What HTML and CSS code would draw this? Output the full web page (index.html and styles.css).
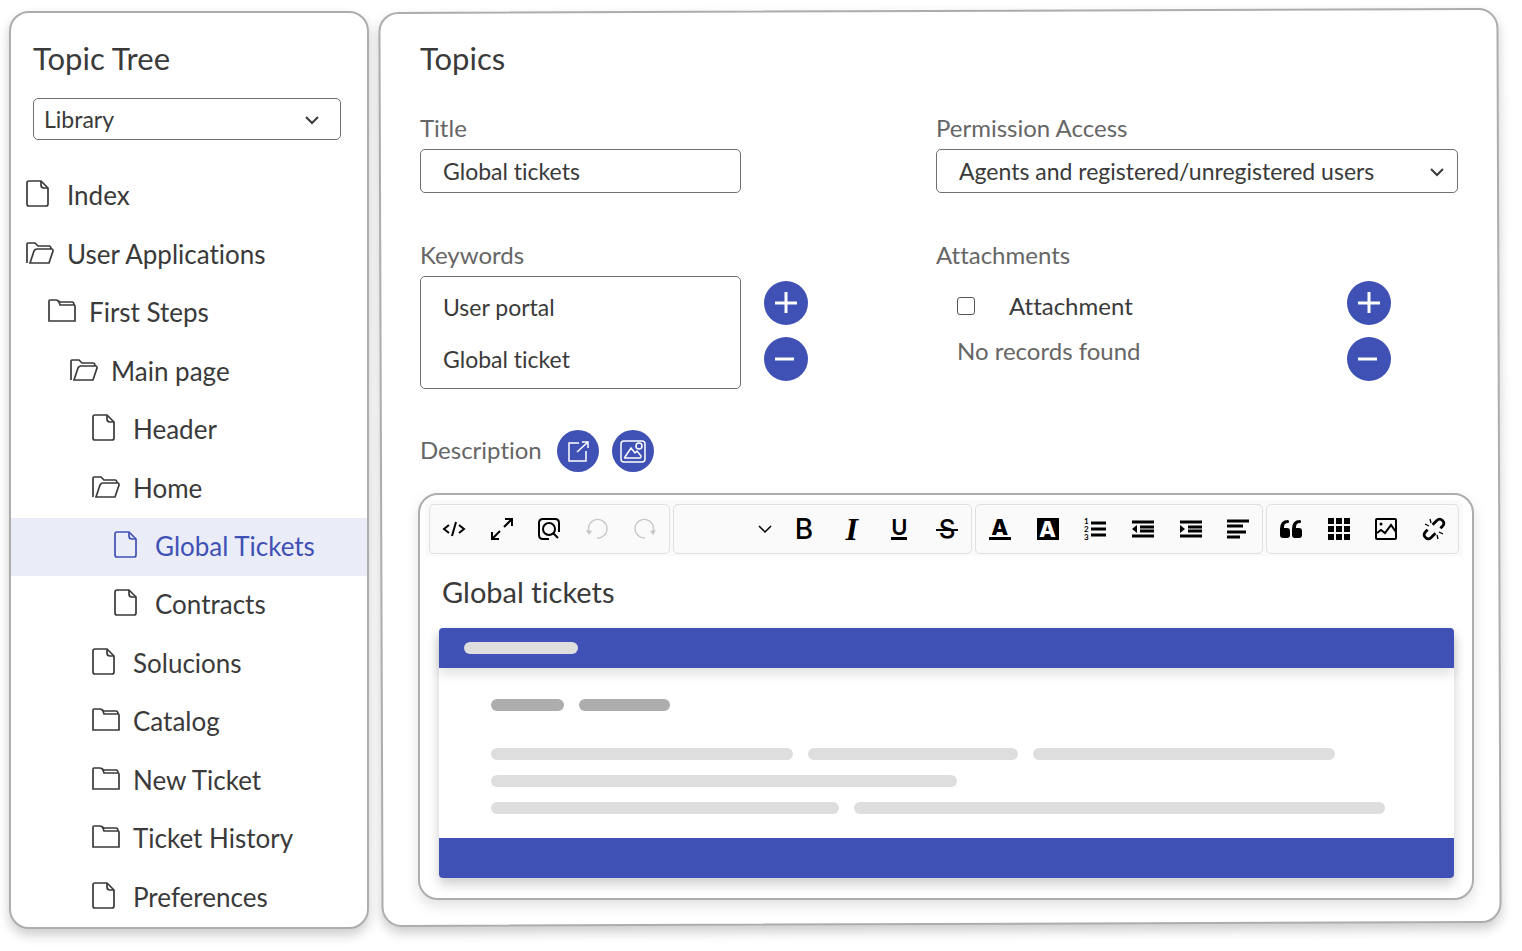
FILE: index.html
```html
<!DOCTYPE html>
<html lang="en">
<head>
<meta charset="utf-8">
<title>Topics</title>
<link rel="stylesheet" href="styles.css">
</head>
<body>
<svg class="defs" aria-hidden="true">
  <symbol id="file" viewBox="0 0 28 28">
    <path d="M3 1H15L22 8V24Q22 26 20 26H3Q1 26 1 24V3Q1 1 3 1Z"/>
    <path d="M15 1V5Q15 8 18 8H22"/>
  </symbol>
  <symbol id="folder" viewBox="0 0 28 28">
    <path d="M1 24V4Q1 3 2 3H8Q10 3 11 5L12 8H26Q27 8 27 9V24Z"/>
    <path d="M10 4L12 5H24Q26 5 26 8"/>
  </symbol>
  <symbol id="folder-open" viewBox="0 0 28 28">
    <path d="M1 24V5Q1 4 2 4H9L12 7H23Q25 7 25 10"/>
    <path d="M4 24L8 12Q9 10 11 10H26Q27 10 27 12L23 24Z"/>
  </symbol>
  <symbol id="chevron" viewBox="0 0 16 16"><path d="M2 5L8 11L14 5"/></symbol>
  <symbol id="plus" viewBox="0 0 24 24"><path d="M1 12H23M12 1V22"/></symbol>
  <symbol id="minus" viewBox="0 0 24 24"><path d="M1 12H20"/></symbol>
</svg>

<aside class="panel tree">
  <h1 class="title">Topic Tree</h1>
  <div class="select library">
    <select aria-label="Topic source"><option>Library</option></select>
    <svg class="chevron"><use href="#chevron"/></svg>
  </div>
  <ul class="nodes">
    <li><a class="node" href="#"><svg><use href="#file"/></svg>Index</a></li>
    <li><a class="node" href="#"><svg><use href="#folder-open"/></svg>User Applications</a></li>
    <li><a class="node level-1" href="#"><svg><use href="#folder"/></svg>First Steps</a></li>
    <li><a class="node level-2" href="#"><svg><use href="#folder-open"/></svg>Main page</a></li>
    <li><a class="node level-3" href="#"><svg><use href="#file"/></svg>Header</a></li>
    <li><a class="node level-3" href="#"><svg><use href="#folder-open"/></svg>Home</a></li>
    <li><a class="node level-4 selected" href="#" aria-current="page"><svg><use href="#file"/></svg>Global Tickets</a></li>
    <li><a class="node level-4" href="#"><svg><use href="#file"/></svg>Contracts</a></li>
    <li><a class="node level-3" href="#"><svg><use href="#file"/></svg>Solucions</a></li>
    <li><a class="node level-3" href="#"><svg><use href="#folder"/></svg>Catalog</a></li>
    <li><a class="node level-3" href="#"><svg><use href="#folder"/></svg>New Ticket</a></li>
    <li><a class="node level-3" href="#"><svg><use href="#folder"/></svg>Ticket History</a></li>
    <li><a class="node level-3" href="#"><svg><use href="#file"/></svg>Preferences</a></li>
  </ul>
</aside>

<main class="topics">
  <h1 class="title">Topics</h1>
  <form class="form">
    <div class="field">
      <label for="title">Title</label>
      <input class="control narrow" id="title" type="text" value="Global tickets">
    </div>
    <div class="field">
      <label for="access">Permission Access</label>
      <div class="select access">
        <select id="access"><option>Agents and registered/unregistered users</option></select>
        <svg class="chevron"><use href="#chevron"/></svg>
      </div>
    </div>
    <div class="field">
      <label for="keywords">Keywords</label>
      <div class="with-buttons">
        <select class="control narrow keywords" id="keywords" multiple size="2">
          <option>User portal</option>
          <option>Global ticket</option>
        </select>
        <div class="stack">
          <button class="round" type="button" aria-label="Add keyword"><svg><use href="#plus"/></svg></button>
          <button class="round" type="button" aria-label="Remove keyword"><svg><use href="#minus"/></svg></button>
        </div>
      </div>
    </div>
    <div class="field">
      <span class="label">Attachments</span>
      <div class="with-buttons attachments">
        <div class="records">
          <label class="check"><input type="checkbox">Attachment</label>
          <p>No records found</p>
        </div>
        <div class="stack">
          <button class="round" type="button" aria-label="Add attachment"><svg><use href="#plus"/></svg></button>
          <button class="round" type="button" aria-label="Remove attachment"><svg><use href="#minus"/></svg></button>
        </div>
      </div>
    </div>
  </form>

  <div class="description">
    <span class="label">Description</span>
    <button class="round small" type="button" aria-label="Open in new window">
      <svg viewBox="0 0 26 26"><path d="M14 5H4V23H21V13M12 14L23 4M17 4H23V10"/></svg>
    </button>
    <button class="round small" type="button" aria-label="Insert picture">
      <svg viewBox="0 0 26 26"><rect x="1" y="3" width="24" height="21" rx="3"/><circle cx="19" cy="8" r="3"/><path d="M5 19L11 10L15 15L17 13L21 18Q21 20 20 20H5Q4 20 5 19Z"/></svg>
    </button>
  </div>

  <section class="editor">
    <div class="toolbar" role="toolbar" aria-label="Formatting">
      <div class="group">
        <button type="button" aria-label="Source code"><svg viewBox="0 0 24 24"><path d="M7 8L2 12L7 16M17 8L22 12L17 16M14 5L10 19"/></svg></button>
        <button type="button" aria-label="Full screen"><svg viewBox="0 0 24 24"><path d="M15 2H22V9M22 2L14 10M9 22H2V15M2 22L10 14"/></svg></button>
        <button type="button" aria-label="Preview"><svg viewBox="0 0 24 24"><path d="M22 15V6Q22 2 18 2H6Q2 2 2 6V18Q2 22 6 22H12"/><circle cx="12" cy="12" r="6"/><path d="M16 16L21 21"/></svg></button>
        <button type="button" aria-label="Undo" disabled><svg viewBox="0 0 24 24"><path d="M4 15A9.300 9.300 0 1 1 12 21"/><path class="solid" d="M1 13L7 14L4 18Z"/></svg></button>
        <button type="button" aria-label="Redo" disabled><svg viewBox="0 0 24 24"><path d="M20 15A9.300 9.300 0 1 0 12 21"/><path class="solid" d="M23 13L17 14L20 18Z"/></svg></button>
      </div>
      <div class="group">
        <div class="select style">
          <select aria-label="Text style"><option label=" "></option></select>
          <svg class="chevron"><use href="#chevron"/></svg>
        </div>
        <button class="letter bold" type="button" aria-label="Bold">B</button>
        <button class="letter italic" type="button" aria-label="Italic">I</button>
        <button class="letter" type="button" aria-label="Underline"><span class="underline">U</span></button>
        <button class="letter" type="button" aria-label="Strikethrough"><span class="strike">S</span></button>
      </div>
      <div class="group">
        <button class="letter" type="button" aria-label="Text colour"><span class="text-colour">A</span></button>
        <button class="letter" type="button" aria-label="Highlight"><span class="highlight">A</span></button>
        <button type="button" aria-label="Numbered list"><svg viewBox="0 0 24 24"><path class="bar" d="M8 6H23M8 12H23M8 18H23"/><text x="1" y="7">1</text><text x="1" y="15">2</text><text x="1" y="23">3</text></svg></button>
        <button type="button" aria-label="Decrease indent"><svg viewBox="0 0 24 24"><path class="bar" d="M1 5H23M9 10H23M9 14H23M1 19H23"/><path class="solid" d="M1 12L6 8V16Z"/></svg></button>
        <button type="button" aria-label="Increase indent"><svg viewBox="0 0 24 24"><path class="bar" d="M1 5H23M9 10H23M9 14H23M1 19H23"/><path class="solid" d="M6 12L1 8V16Z"/></svg></button>
        <button type="button" aria-label="Align left"><svg viewBox="0 0 24 24"><path class="bar" d="M1 4H23M1 9H17M1 15H20M1 20H14"/></svg></button>
      </div>
      <div class="group">
        <button type="button" aria-label="Quote"><svg viewBox="0 0 24 24"><path class="solid" d="M1 12Q1 3 9 3Q10 3 10 5Q10 6 9 6Q5 6 5 10V11H8Q11 11 11 14V18Q11 21 8 21H4Q1 21 1 18ZM13 12Q13 3 21 3Q22 3 22 5Q22 6 21 6Q17 6 17 10V11H20Q23 11 23 14V18Q23 21 20 21H16Q13 21 13 18Z"/></svg></button>
        <button type="button" aria-label="Table"><svg viewBox="0 0 24 24"><path class="solid" d="M1 1h6v6H1zM9 1h6v6H9zM17 1h6v6h-6zM1 9h6v6H1zM9 9h6v6H9zM17 9h6v6h-6zM1 17h6v6H1zM9 17h6v6H9zM17 17h6v6h-6z"/></svg></button>
        <button type="button" aria-label="Image"><svg viewBox="0 0 24 24"><rect x="2" y="2" width="20" height="20" rx="1"/><circle class="solid" cx="7" cy="7" r="1.500"/><path d="M3 16L7 13L11 16L17 8L22 15"/></svg></button>
        <button type="button" aria-label="Remove link"><svg viewBox="0 0 24 24"><g class="chain" transform="rotate(-45 12 12)"><path d="M14 8H20Q24 8 24 12T20 16H17M10 16H4Q0 16 0 12T4 8H7"/></g><path class="ray" d="M8 2L9 6M3 7L7 9M16 22L15 18M21 17L17 15"/></svg></button>
      </div>
    </div>
    <h2 class="heading">Global tickets</h2>
    <div class="preview">
      <div class="preview-head"><i class="pill w-114"></i></div>
      <div class="preview-body">
        <div class="line dark"><i class="pill w-73"></i><i class="pill w-91"></i></div>
        <div class="line"><i class="pill w-302"></i><i class="pill w-210"></i><i class="pill w-302"></i></div>
        <div class="line"><i class="pill w-466"></i></div>
        <div class="line"><i class="pill w-348"></i><i class="pill w-531"></i></div>
      </div>
      <div class="preview-foot"></div>
    </div>
  </section>
</main>
</body>
</html>
```

FILE: styles.css
```css
* { box-sizing: border-box; }

body {
  margin: 0;
  min-height: 100vh;
  padding: 10px 22px 22px 9px;
  display: grid;
  grid-template-columns: 360px minmax(0, 1fr);
  gap: 11px;
  background: #fff;
  color: #3a3a3a;
  font-family: Lato, "Open Sans", sans-serif;
  font-size: 24px;
  font-variant-ligatures: none;
}

h1, h2, p, ul { margin: 0; padding: 0; font-weight: 400; }
ul { list-style: none; }
button, input, select { font: inherit; color: inherit; margin: 0; }
svg { fill: none; stroke: currentColor; }
.defs { position: absolute; width: 0; height: 0; }

.title { font-size: 31px; line-height: 38px; }

/* Topic tree */
.tree {
  display: flex;
  flex-direction: column;
  margin-top: 1px;
  padding-top: 26px;
  border: 2px solid #adadad;
  border-radius: 20px;
  background: #fff;
  box-shadow: 0 6px 12px rgba(0, 0, 0, 0.2);
}
.tree .title { margin: 0 22px 21px; }

.select { position: relative; border: 1px solid #707070; border-radius: 5px; }
.select select {
  display: block;
  width: 100%;
  height: 100%;
  border: 0;
  background: none;
  font-size: 23px;
  appearance: none;
}
.select .chevron {
  position: absolute;
  top: 50%;
  width: 16px;
  height: 16px;
  margin-top: -7px;
  stroke-width: 2;
  pointer-events: none;
}
.library { height: 42px; margin: 0 26px 27px 22px; }
.library select { padding: 0 40px 0 10px; }
.library .chevron { right: 20px; }

.nodes { flex: 1; display: grid; grid-auto-rows: 1fr; }
.nodes li { display: grid; min-height: 44px; }
.node {
  display: flex;
  align-items: center;
  gap: 13px;
  padding: 0 0 2px 15px;
  color: inherit;
  font-size: 26px;
  line-height: 32px;
  text-decoration: none;
}
.node svg { width: 28px; height: 28px; margin-bottom: 2px; stroke-width: 1.7; }
.level-1 { padding-left: 37px; }
.level-2 { padding-left: 59px; }
.level-3 { padding-left: 81px; }
.level-4 { padding-left: 103px; }
.selected { background: #eaedf7; color: #3f51b5; }

/* Topics panel */
.topics {
  position: relative;
  display: flex;
  flex-direction: column;
  margin-bottom: 4px;
  padding: 29px 42px 25px 40px;
}
.topics::before {
  content: "";
  position: absolute;
  inset: 0;
  z-index: -1;
  border: 2px solid #adadad;
  border-radius: 20px;
  background: #fff;
  box-shadow: 0 6px 12px rgba(0, 0, 0, 0.2);
  transform: rotate(-0.2deg);
}
.form {
  display: grid;
  grid-template-columns: 516fr 522fr;
  row-gap: 48px;
  margin-top: 37px;
}
.field > label, .label { display: block; color: #666; line-height: 28px; }
.field > label, .field > .label { margin-bottom: 7px; }
.control {
  display: block;
  border: 1px solid #707070;
  border-radius: 5px;
  background: #fff;
}
.control { font-size: 23px; }
.narrow { width: 321px; height: 44px; padding: 0 22px; }
.access { height: 44px; }
.access select { padding: 0 40px 0 22px; }
.access .chevron { right: 12px; }

.with-buttons { display: flex; gap: 23px; }
.keywords { height: 113px; padding: 4px 0; overflow: hidden; outline: 0; }
.keywords option { height: 52px; padding: 12px 22px; line-height: 28px; }
.stack { display: grid; gap: 12px; align-content: start; padding-top: 5px; }
.attachments { justify-content: space-between; padding-right: 67px; }
.records { padding: 15px 0 0 21px; line-height: 30px; color: #666; }
.records p { margin-top: 15px; }
.check { display: flex; align-items: center; gap: 34px; color: #3a3a3a; }
.check input {
  width: 18px;
  height: 18px;
  border: 1px solid #555;
  border-radius: 3px;
  background: #fff;
  appearance: none;
}
.round {
  display: grid;
  place-items: center;
  width: 44px;
  height: 44px;
  padding: 0;
  border: 0;
  border-radius: 50%;
  background: #3f51b5;
  color: #fff;
}
.round svg { width: 24px; height: 24px; stroke-width: 3; }
.small { width: 42px; height: 42px; }
.small svg { width: 26px; height: 26px; stroke-width: 1.5; }
.description { display: flex; align-items: center; gap: 13px; margin-top: 41px; }
.description .label { width: 124px; padding-bottom: 2px; }

/* Rich text editor */
.editor {
  flex: 1;
  display: flex;
  flex-direction: column;
  margin: 21px -16px 0 -2px;
  padding: 5px 0 20px;
  border: 2px solid #adadad;
  border-radius: 20px;
  background: #fff;
  box-shadow: 0 6px 14px rgba(0, 0, 0, 0.12);
}
.toolbar {
  display: grid;
  grid-template-columns: 241fr 299fr 288fr 193fr;
  gap: 3px;
  margin: 0 9px 0 5px;
  padding: 4px 4px 2px;
  background: #fafafa;
  color: #000;
}
.group {
  display: flex;
  height: 50px;
  border: 1px solid #e0e0e0;
  border-radius: 5px;
}
.group button {
  flex: 1;
  display: grid;
  place-items: center;
  min-width: 0;
  padding: 0;
  border: 0;
  background: none;
}
.group svg { width: 24px; height: 24px; stroke-width: 2; }
.group button:disabled { color: #c6c6c6; }
.group button:disabled svg { stroke-width: 1.3; }
.group .solid { fill: currentColor; stroke: none; }
.group .bar { stroke-width: 3; }
.group .chain { stroke-width: 2.7; }
.group .ray { stroke-width: 1.3; }
.group text { fill: currentColor; stroke: none; font: 700 8px Lato, sans-serif; }
.group .style { flex: 0 0 106px; border: 0; }
.group .chevron { right: 7px; width: 16px; height: 16px; stroke-width: 1.5; margin-top: -8px; }
.group .letter { font: 600 28px/28px Inter, sans-serif; }
.group .bold { font-weight: 500; }
.group .italic { font: italic 700 32px/32px "Liberation Serif", serif; }
.underline { padding: 0 0 1px; border-bottom: 3px solid; font-size: 22px; line-height: 18px; }
.strike { position: relative; width: 22px; font-size: 26px; font-weight: 500; }
.strike::after {
  content: "";
  position: absolute;
  inset: 50% 0 auto;
  border-top: 2px solid;
}
.text-colour { width: 22px; border-bottom: 3px solid; font-size: 22px; font-weight: 800; line-height: 19px; }
.highlight { width: 22px; background: #000; color: #fff; font-size: 22px; font-weight: 800; line-height: 22px; }

.heading { margin: 17px 22px 17px; font-size: 29px; line-height: 38px; }
.preview {
  flex: 1;
  display: flex;
  flex-direction: column;
  margin: 0 18px 0 19px;
  border-radius: 4px;
  box-shadow: 0 6px 12px rgba(0, 0, 0, 0.2);
}
.preview-head {
  display: flex;
  align-items: center;
  height: 40px;
  padding-left: 25px;
  border-radius: 4px 4px 0 0;
  background: #3f51b5;
  box-shadow: 0 6px 12px rgba(0, 0, 0, 0.12);
}
.preview-body { flex: 1; display: grid; align-content: start; gap: 15px; padding: 31px 52px 24px; }
.preview-foot { height: 40px; border-radius: 0 0 4px 4px; background: #3f51b5; }
.line { display: flex; gap: 15px; }
.dark { margin-bottom: 22px; }
.pill { height: 12px; border-radius: 6px; background: #dedede; }
.dark .pill { background: #adadad; }
.w-73 { width: 73px; }
.w-91 { width: 91px; }
.w-114 { width: 114px; }
.w-210 { width: 210px; }
.w-302 { width: 302px; }
.w-348 { width: 348px; }
.w-466 { width: 466px; }
.w-531 { width: 531px; }
```
